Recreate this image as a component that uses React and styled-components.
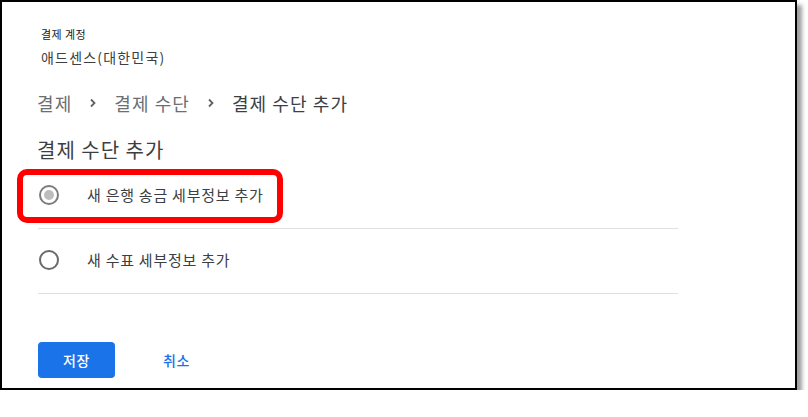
import React from "react";
import styled, { createGlobalStyle } from "styled-components";

const Global = createGlobalStyle`
  html, body { margin: 0; padding: 0; background: #ffffff; }
  body { font-family: "Noto Sans CJK KR", "Noto Sans", Roboto, sans-serif; }
  * { box-sizing: border-box; }
`;

const Frame = styled.div`
  width: 797px;
  height: 390px;
  border: 2px solid #000000;
  background: #ffffff;
  box-shadow: 5px 5px 4px rgba(80, 80, 80, 0.55);
  padding: 24px 0 0 35px;
  display: flex;
  flex-direction: column;
`;

const Account = styled.div`
  display: flex;
  flex-direction: column;
  padding-left: 4px;
  gap: 5px;
`;

const AccountLabel = styled.div`
  font-size: 11px;
  line-height: 16px;
  letter-spacing: 0.04em;
  color: #202124;
`;

const AccountName = styled.div`
  font-size: 14px;
  line-height: 20px;
  letter-spacing: 0.085em;
  color: #3c4043;
`;

const Crumbs = styled.nav`
  margin-top: 24px;
  display: flex;
  align-items: center;
  font-size: 18px;
  line-height: 24px;
  letter-spacing: 0.06em;
  color: #5f6368;
`;

const Crumb = styled.span`
  color: ${(p) => (p.$current ? "#3c4043" : "#6b6f73")};
`;

const Sep = styled.span`
  width: 42px;
  display: flex;
  justify-content: center;
  align-items: center;
  color: #5f6368;
`;

const Title = styled.h2`
  margin: 21px 0 0 0;
  font-size: 20px;
  line-height: 28px;
  font-weight: 400;
  letter-spacing: 0.05em;
  color: #3c4043;
`;

const Options = styled.div`
  width: 640px;
  margin-left: 1px;
  display: flex;
  flex-direction: column;
`;

const Option = styled.label`
  position: relative;
  height: 65px;
  display: flex;
  align-items: center;
  gap: 28px;
  padding-left: 1px;
  border-bottom: 1px solid #e0e0e0;
  font-size: 15px;
  letter-spacing: 0.05em;
  color: #3c4043;
  padding-bottom: 3px;
`;

const Radio = styled.span`
  width: 20px;
  height: 20px;
  border-radius: 50%;
  border: 2px solid ${(p) => (p.$checked ? "#7c7c7c" : "#6a6a6a")};
  display: flex;
  align-items: center;
  justify-content: center;
  flex: none;
  &::after {
    content: "";
    width: 10px;
    height: 10px;
    border-radius: 50%;
    background: ${(p) => (p.$checked ? "#bdbdbd" : "transparent")};
  }
`;

const Highlight = styled.span`
  position: absolute;
  left: -21px;
  top: 5px;
  width: 266px;
  height: 54px;
  border: 6px solid #ff0000;
  border-radius: 10px;
  pointer-events: none;
`;

const Actions = styled.div`
  margin-top: 48px;
  margin-left: 1px;
  display: flex;
  align-items: center;
  gap: 48px;
`;

const Primary = styled.button`
  width: 77px;
  height: 36px;
  border: none;
  border-radius: 4px;
  background: #1a73e8;
  color: #ffffff;
  font-family: inherit;
  font-size: 14px;
  font-weight: 500;
  letter-spacing: 0.05em;
  padding: 0;
`;

const TextButton = styled.button`
  height: 36px;
  border: none;
  background: transparent;
  color: #1a73e8;
  font-family: inherit;
  font-size: 14px;
  font-weight: 500;
  letter-spacing: 0.05em;
  padding: 0;
`;

const Chevron = () => (
  <svg width="8" height="10" viewBox="0 0 8 10" aria-hidden="true">
    <path d="M2 1.5 L5.5 5 L2 8.5" fill="none" stroke="#5f6368" strokeWidth="1.8" />
  </svg>
);

export default function App() {
  return (
    <>
      <Global />
      <Frame>
        <Account>
          <AccountLabel>결제 계정</AccountLabel>
          <AccountName>애드센스(대한민국)</AccountName>
        </Account>
        <Crumbs>
          <Crumb>결제</Crumb>
          <Sep><Chevron /></Sep>
          <Crumb>결제 수단</Crumb>
          <Sep><Chevron /></Sep>
          <Crumb $current>결제 수단 추가</Crumb>
        </Crumbs>
        <Title>결제 수단 추가</Title>
        <Options>
          <Option>
            <Highlight />
            <Radio $checked />
            새 은행 송금 세부정보 추가
          </Option>
          <Option>
            <Radio />
            새 수표 세부정보 추가
          </Option>
        </Options>
        <Actions>
          <Primary>저장</Primary>
          <TextButton>취소</TextButton>
        </Actions>
      </Frame>
    </>
  );
}
